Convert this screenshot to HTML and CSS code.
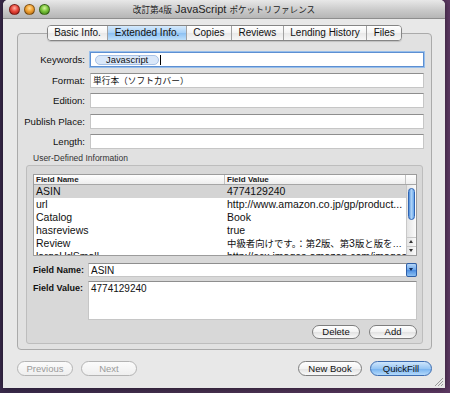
FILE: index.html
```html
<!DOCTYPE html>
<html lang="ja">

<head>
    <meta charset="UTF-8">
    <meta name="viewport" content="width=device-width, initial-scale=1.0">
    <title>改訂第4版 JavaScript ポケットリファレンス</title>
    <link rel="stylesheet" href="styles.css">
</head>

<body>
    <div class="window">
        <div class="titlebar">
            <div class="lights">
                <span class="light red"></span>
                <span class="light orange"></span>
                <span class="light green"></span>
            </div>
            <div class="title"><span class="jp">改訂第4版</span> JavaScript <span class="jp">ポケットリファレンス</span></div>
            <div></div>
        </div>
        <div class="content">
            <div class="tabs">
                <span class="tab">Basic Info.</span>
                <span class="tab selected">Extended Info.</span>
                <span class="tab">Copies</span>
                <span class="tab">Reviews</span>
                <span class="tab">Lending History</span>
                <span class="tab">Files</span>
            </div>
            <div class="tabbox">
                <div class="form">
                    <label>Keywords:</label>
                    <div class="field focused"><span class="token">Javascript</span><span class="caret"></span></div>
                    <label>Format:</label>
                    <div class="field"><span class="jp">単行本（ソフトカバー）</span></div>
                    <label>Edition:</label>
                    <div class="field"></div>
                    <label>Publish Place:</label>
                    <div class="field"></div>
                    <label>Length:</label>
                    <div class="field"></div>
                </div>
                <div class="group-label">User-Defined Information</div>
                <div class="group">
                    <div class="table">
                        <div class="thead">
                            <span>Field Name</span>
                            <span>Field Value</span>
                            <span class="corner"></span>
                        </div>
                        <div class="tbody">
                            <div class="rows">
                                <div class="row sel"><span>ASIN</span><span>4774129240</span></div>
                                <div class="row"><span>url</span><span>http://www.amazon.co.jp/gp/product...</span></div>
                                <div class="row"><span>Catalog</span><span>Book</span></div>
                                <div class="row"><span>hasreviews</span><span>true</span></div>
                                <div class="row"><span>Review</span><span><span class="jp">中級者向けです。：第</span>2<span class="jp">版、第</span>3<span class="jp">版と版を…</span></span></div>
                                <div class="row"><span>largeUrlSmall</span><span>http://ecx.images-amazon.com/images</span></div>
                            </div>
                            <div class="vscroll">
                                <div class="thumb"></div>
                                <div class="arrow up"></div>
                                <div class="arrow down"></div>
                            </div>
                        </div>
                    </div>
                    <div class="edit">
                        <label>Field Name:</label>
                        <div class="field combo"><span class="combo-text">ASIN</span><span class="combo-btn"></span></div>
                        <label>Field Value:</label>
                        <div class="field area">4774129240</div>
                    </div>
                    <div class="actions">
                        <button class="btn small">Delete</button>
                        <button class="btn small">Add</button>
                    </div>
                </div>
            </div>
            <div class="footer">
                <div class="btn-row">
                    <button class="btn wide disabled">Previous</button>
                    <button class="btn wide disabled">Next</button>
                </div>
                <div class="btn-row">
                    <button class="btn newbook">New Book</button>
                    <button class="btn default">QuickFill</button>
                </div>
            </div>
        </div>
        <svg class="grip" width="9" height="9" viewBox="0 0 9 9">
            <path d="M1 9 L9 1 M4 9 L9 4 M7 9 L9 7" stroke="#9a9a9a" stroke-width="1"/>
        </svg>
    </div>
</body>

</html>
```

FILE: styles.css
```css
body {
    margin: 0;
    width: 450px;
    height: 393px;
    overflow: hidden;
    background: linear-gradient(to right, #3a2a4c 0%, #46304f 45%, #5c3862 100%);
    font-family: "Lucida Grande", "Liberation Sans", "Noto Sans CJK JP", sans-serif;
    color: #111;
}

.window {
    position: relative;
    margin-left: 3px;
    width: 442px;
    height: 388px;
    background: #e8e8e8;
    border-radius: 5px 5px 0 0;
    display: flex;
    flex-direction: column;
    box-shadow: 0 0 6px rgba(0, 0, 0, 0.5);
}

.titlebar {
    height: 18px;
    border-bottom: 1px solid #8e8e8e;
    border-radius: 5px 5px 0 0;
    background: linear-gradient(#e8e8e8, #cacaca 55%, #b6b6b6);
    display: grid;
    grid-template-columns: 1fr auto 1fr;
    align-items: center;
}

.lights {
    display: flex;
    gap: 4px;
    padding-left: 6px;
}

.light {
    width: 11px;
    height: 11px;
    border-radius: 50%;
    box-sizing: border-box;
    border: 1px solid rgba(0, 0, 0, 0.4);
}

.red {
    background: radial-gradient(circle at 50% 35%, #ffb3a8 0%, #e8493c 45%, #a3140c 100%);
}

.orange {
    background: radial-gradient(circle at 50% 35%, #ffe0a0 0%, #f1a233 45%, #a8600a 100%);
}

.green {
    background: radial-gradient(circle at 50% 35%, #d8f5a0 0%, #79c43a 45%, #3b7a12 100%);
}

.title {
    font-size: 11px;
    color: #222;
    white-space: nowrap;
}

.title .jp {
    font-size: 8.6px;
}

.content {
    padding: 6px 13px 0 14px;
    display: flex;
    flex-direction: column;
}

/* tab strip sits over the top border of the box */
.tabs {
    position: relative;
    z-index: 1;
    align-self: center;
    display: flex;
    height: 16px;
    box-sizing: border-box;
    border: 1px solid #858585;
    border-radius: 4px;
    overflow: hidden;
    box-shadow: 0 1px 1px rgba(0, 0, 0, 0.15);
}

.tab {
    padding: 0 6.5px;
    font-size: 10px;
    line-height: 14px;
    background: linear-gradient(#ffffff, #f3f3f3 50%, #e8e8e8 51%, #f7f7f7);
    border-left: 1px solid #a2a2a2;
    white-space: nowrap;
}

.tab:first-child {
    border-left: none;
}

.tab.selected {
    background: linear-gradient(#d6eafc, #a6d0f7 50%, #8cc0f2 51%, #bfe0fb);
}

.tabbox {
    margin-top: -8px;
    height: 317px;
    box-sizing: border-box;
    border: 1px solid #aaaaaa;
    border-radius: 4px;
    background: #e1e1e1;
    padding: 18px 0 0 0;
}

.form {
    display: grid;
    grid-template-columns: 67px 1fr;
    grid-auto-rows: 15px;
    column-gap: 5px;
    row-gap: 5.5px;
    padding-right: 7px;
}

.form label {
    text-align: right;
    font-size: 9.6px;
    line-height: 15px;
    white-space: nowrap;
}

.field {
    box-sizing: border-box;
    height: 15px;
    background: #fff;
    border: 1px solid #c6c6c6;
    border-top-color: #8e8e8e;
    font-size: 10px;
    padding: 0 2px;
    display: flex;
    align-items: center;
    white-space: nowrap;
}

.field .jp {
    font-size: 8.7px;
}

.field.focused {
    border-color: #5d8fd2;
    box-shadow: 0 0 0 1px #98bfeb;
}

.token {
    margin-left: 2px;
    height: 10px;
    box-sizing: border-box;
    padding: 0 10px;
    border: 1px solid #a8c2e6;
    border-radius: 5px;
    background: #d9e7f9;
    font-size: 9.4px;
    line-height: 8px;
}

.caret {
    width: 1px;
    height: 10px;
    margin-left: 1px;
    background: #000;
}

.group-label {
    margin: 3px 0 1px 15px;
    font-size: 8.5px;
    line-height: 12px;
    color: #333;
}

.group {
    margin: 0 8px 0 8px;
    border: 1px solid #bdbdbd;
    border-radius: 3px;
    background: #d8d8d8;
    padding: 8px 5px 4px 6px;
}

.table {
    height: 82px;
    box-sizing: border-box;
    border: 1px solid #9c9c9c;
    background: #fff;
    display: flex;
    flex-direction: column;
}

.thead {
    display: grid;
    grid-template-columns: 191px 1fr 10px;
    height: 10px;
    box-sizing: border-box;
    border-bottom: 1px solid #a6a6a6;
    background: linear-gradient(#ffffff, #eeeeee);
    font-size: 8px;
    font-weight: bold;
    line-height: 9px;
    color: #222;
}

.thead span {
    padding-left: 2px;
    border-right: 1px solid #c2c2c2;
}

.thead .corner {
    border-right: none;
}

.tbody {
    flex: 1;
    display: flex;
    overflow: hidden;
}

.rows {
    flex: 1;
    overflow: hidden;
}

.row {
    display: grid;
    grid-template-columns: 191px 1fr;
    height: 13px;
    font-size: 10.5px;
    line-height: 13px;
}

.row span {
    padding-left: 2px;
    white-space: nowrap;
    overflow: hidden;
}

.row .jp {
    padding: 0;
    font-size: 9.4px;
}

.row.sel {
    background: #d4d4d4;
}

.vscroll {
    width: 10px;
    box-sizing: border-box;
    border-left: 1px solid #c8c8c8;
    background: linear-gradient(to right, #e4e4e4, #fbfbfb);
    display: flex;
    flex-direction: column;
}

.thumb {
    margin: 3px 1px 0;
    height: 30px;
    border-radius: 4px;
    border: 1px solid #2f64b3;
    background: linear-gradient(to right, #4a8ad9, #b2d6f8 45%, #6aa6ea);
}

.arrow {
    height: 8px;
    position: relative;
    border-top: 1px solid #c8c8c8;
}

.arrow.up {
    margin-top: auto;
}

.arrow::after {
    content: "";
    position: absolute;
    left: 2px;
    top: 2px;
    border-left: 2.5px solid transparent;
    border-right: 2.5px solid transparent;
}

.arrow.up::after {
    border-bottom: 3px solid #333;
}

.arrow.down::after {
    border-top: 3px solid #333;
}

.edit {
    margin-top: 7px;
    display: grid;
    grid-template-columns: 50px 1fr;
    grid-template-rows: 14px 39px;
    column-gap: 5px;
    row-gap: 4px;
}

.edit label {
    text-align: right;
    font-size: 9px;
    font-weight: bold;
    line-height: 14px;
    white-space: nowrap;
}

.combo {
    height: 14px;
    padding-right: 0;
}

.combo-text {
    flex: 1;
    font-size: 10px;
}

.combo-btn {
    width: 11px;
    height: 14px;
    margin: -1px -1px -1px 0;
    box-sizing: border-box;
    border: 1px solid #2e5fa8;
    border-radius: 2px;
    background: linear-gradient(#b5d6f8, #6aa5ea 50%, #4b8ce0 51%, #8cc0f2);
    position: relative;
}

.combo-btn::after {
    content: "";
    position: absolute;
    left: 2px;
    top: 4px;
    border-left: 2.5px solid transparent;
    border-right: 2.5px solid transparent;
    border-top: 3.5px solid #0d2a5c;
}

.field.area {
    height: 39px;
    align-items: flex-start;
    padding-top: 1px;
    line-height: 11px;
}

.actions {
    margin-top: 5px;
    display: flex;
    justify-content: flex-end;
    gap: 9px;
}

.btn {
    box-sizing: border-box;
    height: 14px;
    padding: 0;
    border: 1px solid #7e7e7e;
    border-radius: 8px;
    background: linear-gradient(#ffffff, #f2f2f2 50%, #e2e2e2 51%, #f9f9f9);
    font-family: inherit;
    font-size: 9.5px;
    line-height: 12px;
    color: #111;
    text-align: center;
}

.btn.small {
    width: 48px;
}

.footer {
    margin-top: 11px;
    display: flex;
    justify-content: space-between;
}

.btn-row {
    display: flex;
    gap: 8px;
}

.footer .btn {
    height: 15px;
    line-height: 13px;
}

.btn.wide {
    width: 56px;
}

.btn.disabled {
    color: #9a9a9a;
    border-color: #b4b4b4;
    background: linear-gradient(#fbfbfb, #efefef);
}

.btn.newbook {
    width: 64px;
}

.btn.default {
    width: 62px;
    border-color: #3d6db2;
    background: linear-gradient(#cfe6fc, #97c6f4 50%, #74b0ef 51%, #b4dafb);
}

.grip {
    position: absolute;
    right: 2px;
    bottom: 2px;
}
```
